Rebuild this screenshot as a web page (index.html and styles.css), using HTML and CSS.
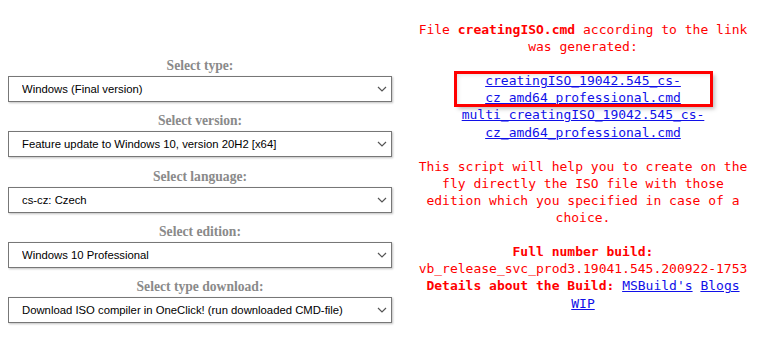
FILE: index.html
```html
<!DOCTYPE html>
<html lang="en">
<head>
    <meta charset="UTF-8">
    <title>Creating ISO</title>
    <link rel="stylesheet" href="styles.css">
</head>
<body>
<div class="page">
    <div class="options">
        <div class="field">
            <label class="caption" for="type">Select type:</label>
            <div class="select-wrap">
                <select id="type"><option>Windows (Final version)</option></select>
                <svg class="arrow" width="10" height="6" viewBox="0 0 10 6"><path d="M1 1l4 4 4-4" fill="none" stroke="#555" stroke-width="1.2"/></svg>
            </div>
        </div>
        <div class="field">
            <label class="caption" for="version">Select version:</label>
            <div class="select-wrap">
                <select id="version"><option>Feature update to Windows 10, version 20H2 [x64]</option></select>
                <svg class="arrow" width="10" height="6" viewBox="0 0 10 6"><path d="M1 1l4 4 4-4" fill="none" stroke="#555" stroke-width="1.2"/></svg>
            </div>
        </div>
        <div class="field">
            <label class="caption" for="lang">Select language:</label>
            <div class="select-wrap">
                <select id="lang"><option>cs-cz: Czech</option></select>
                <svg class="arrow" width="10" height="6" viewBox="0 0 10 6"><path d="M1 1l4 4 4-4" fill="none" stroke="#555" stroke-width="1.2"/></svg>
            </div>
        </div>
        <div class="field">
            <label class="caption" for="edition">Select edition:</label>
            <div class="select-wrap">
                <select id="edition"><option>Windows 10 Professional</option></select>
                <svg class="arrow" width="10" height="6" viewBox="0 0 10 6"><path d="M1 1l4 4 4-4" fill="none" stroke="#555" stroke-width="1.2"/></svg>
            </div>
        </div>
        <div class="field">
            <label class="caption" for="download">Select type download:</label>
            <div class="select-wrap">
                <select id="download"><option>Download ISO compiler in OneClick! (run downloaded CMD-file)</option></select>
                <svg class="arrow" width="10" height="6" viewBox="0 0 10 6"><path d="M1 1l4 4 4-4" fill="none" stroke="#555" stroke-width="1.2"/></svg>
            </div>
        </div>
    </div>

    <div class="result">
        <p>File <b>creatingISO.cmd</b> according to the link was generated:</p>
        <div class="links">
            <div class="highlight">
                <a href="#">creatingISO_19042.545_cs-cz_amd64_professional.cmd</a>
            </div>
            <a href="#">multi_creatingISO_19042.545_cs-cz_amd64_professional.cmd</a>
        </div>
        <p>This script will help you to create on the fly directly the ISO file with those edition which you specified in case of a choice.</p>
        <p>
            <b>Full number build:</b><br>
            vb_release_svc_prod3.19041.545.200922-1753<br>
            <b>Details about the Build:</b> <a href="#">MSBuild's</a> <a href="#">Blogs WIP</a>
        </p>
    </div>
</div>
</body>
</html>
```

FILE: styles.css
```css
* {
  box-sizing: border-box;
  margin: 0;
  padding: 0;
}

body {
  margin: 8px;
  background: #fff;
}

.page {
  display: grid;
  grid-template-columns: 384px 1fr;
  column-gap: 23px;
}

/* Left column: selects */
.options {
  padding-top: 48px;
}

.field {
  margin-bottom: 9.25px;
}

.caption {
  display: block;
  text-align: center;
  font-family: 'Liberation Serif', 'DejaVu Serif', serif;
  font-weight: bold;
  font-size: 13.6px;
  line-height: 20px;
  color: #8a8a8a;
}

.select-wrap {
  position: relative;
}

.select-wrap select {
  display: block;
  width: 100%;
  height: 26px;
  padding: 0 24px 0 13px;
  appearance: none;
  -webkit-appearance: none;
  border: 1px solid #777;
  border-radius: 0;
  background: #fff;
  box-shadow: 1px 1px 2px rgba(0, 0, 0, 0.25);
  font-family: 'Liberation Sans', Arial, sans-serif;
  font-size: 11.3px;
  color: #000;
}

.select-wrap .arrow {
  position: absolute;
  right: 5px;
  top: 10px;
}

/* Right column: generated result */
.result {
  padding-top: 13px;
  text-align: center;
  font-family: 'DejaVu Sans Mono', 'Liberation Mono', monospace;
  font-size: 13px;
  line-height: 17.1px;
  color: #f00;
}

.result p {
  margin-bottom: 17.1px;
}

.result a {
  color: #1010e8;
  text-decoration: underline;
}

.links {
  margin-bottom: 17.1px;
}

.highlight {
  width: 257px;
  margin: 0 auto;
  outline: 3px solid #f00;
  outline-offset: -2px;
  box-shadow: 3px 3px 4px rgba(0, 0, 0, 0.25), inset 3px 3px 4px rgba(0, 0, 0, 0.12);
}
```
